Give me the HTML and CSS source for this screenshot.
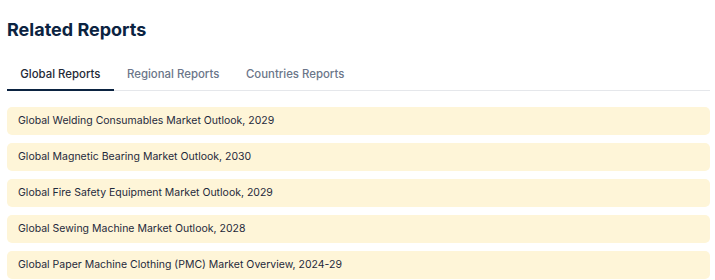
FILE: index.html
```html
<!DOCTYPE html>
<html lang="en">
<head>
    <meta charset="UTF-8">
    <title>Related Reports</title>
    <link rel="stylesheet" href="styles.css">
</head>
<body>

    <!-- Related Reports -->
    <div class="related">
        <h2>Related Reports</h2>

        <div class="tabs">
            <a class="tab active" href="#">Global Reports</a>
            <a class="tab" href="#">Regional Reports</a>
            <a class="tab" href="#">Countries Reports</a>
        </div>

        <ul class="report-list">
            <li><a href="#">Global Welding Consumables Market Outlook, 2029</a></li>
            <li><a href="#">Global Magnetic Bearing Market Outlook, 2030</a></li>
            <li><a href="#">Global Fire Safety Equipment Market Outlook, 2029</a></li>
            <li><a href="#">Global Sewing Machine Market Outlook, 2028</a></li>
            <li><a href="#">Global Paper Machine Clothing (PMC) Market Overview, 2024-29</a></li>
        </ul>
    </div>

</body>
</html>
```

FILE: styles.css
```css
body {
    font-family: 'Inter', 'Liberation Sans', sans-serif;
    background-color: #ffffff;
    color: #1e293b;
    margin: 0;
    padding: 0;
}

.related {
    padding: 18px 5px 0 7px;
}

.related h2 {
    margin: 0;
    font-size: 18px;
    font-weight: 700;
    line-height: 24px;
    color: #0b2341;
}

/* Tabs */
.tabs {
    display: flex;
    margin-top: 18px;
    border-bottom: 1px solid #e5e7eb;
}

.tab {
    padding: 6px 13.3px 7px;
    font-size: 11.4px;
    font-weight: 500;
    line-height: 16px;
    color: #6b7689;
    text-decoration: none;
    border-bottom: 2px solid transparent;
    margin-bottom: -1px;
}

.tab.active {
    color: #1f2937;
    border-bottom-color: #0b2341;
}

/* Report list */
.report-list {
    list-style: none;
    margin: 16px 0 0;
    padding: 0;
    display: flex;
    flex-direction: column;
    gap: 8px;
}

.report-list li {
    background-color: #fef5d8;
    border-radius: 5px;
}

.report-list a {
    display: block;
    padding: 0 11px;
    height: 28px;
    line-height: 28px;
    font-size: 10.5px;
    color: #1e293b;
    text-decoration: none;
}
```
